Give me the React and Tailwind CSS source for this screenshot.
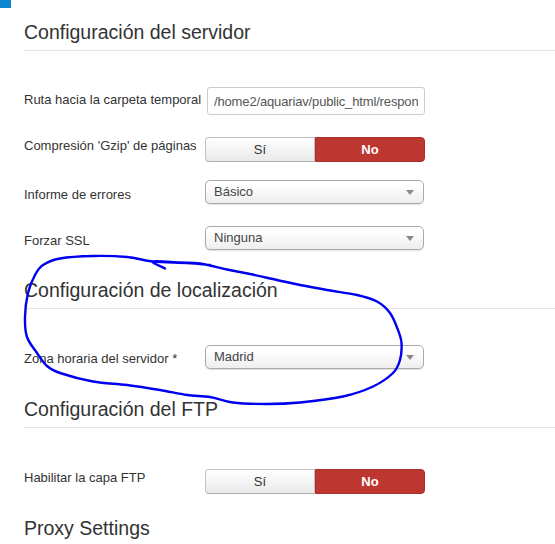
const scribblePts = [
  [210, 265], [187, 263], [153, 261.5], [127, 257], [93, 256], [60, 258.5], [43, 265],
  [35, 275], [28, 293], [25, 317], [27, 337], [37, 353], [47, 366], [60, 373],
  [93, 381.5], [127, 385], [160, 390], [187, 395], [210, 397], [233, 402.5],
  [267, 404], [300, 402.5], [343, 396.5], [373, 386.5], [393, 373], [400, 360],
  [401.5, 343], [398, 330], [390, 313], [377, 301.5], [357, 295], [327, 290],
  [300, 285], [277, 280], [250, 274], [227, 269.5], [200, 263.5], [180, 262.5],
  [153, 261.5], [165, 268.5],
];

function smoothPath(pts) {
  let d = `M${pts[0][0]},${pts[0][1]}`;
  for (let i = 0; i < pts.length - 1; i++) {
    const p0 = pts[i - 1] || pts[i];
    const p1 = pts[i];
    const p2 = pts[i + 1];
    const p3 = pts[i + 2] || p2;
    const c1 = [p1[0] + (p2[0] - p0[0]) / 6, p1[1] + (p2[1] - p0[1]) / 6];
    const c2 = [p2[0] - (p3[0] - p1[0]) / 6, p2[1] - (p3[1] - p1[1]) / 6];
    d += ` C${c1[0]},${c1[1]} ${c2[0]},${c2[1]} ${p2[0]},${p2[1]}`;
  }
  return d;
}

function Legend({ children, className = "" }) {
  return (
    <h2 className={`border-b border-[#e5e5e5] text-[19.5px] leading-[36px] text-[#333] ${className}`}>
      {children}
    </h2>
  );
}

function Toggle() {
  return (
    <div className="flex h-[25px] w-[220px] text-[13px]">
      <span className="flex flex-1 items-center justify-center rounded-l-[4px] border border-[#c2c2c2] border-b-[#adadad] bg-linear-to-b from-white to-[#e9e9e9] text-[#333]">
        Sí
      </span>
      <span className="flex flex-1 items-center justify-center rounded-r-[4px] border border-[#a9302a] bg-[#bd362f] font-bold text-white">
        No
      </span>
    </div>
  );
}

function Select({ value }) {
  return (
    <div className="flex h-[24px] w-[219px] items-center justify-between rounded-[5px] border border-[#aaa] bg-linear-to-b from-white from-20% to-[#eeeeee] pl-[8px] pr-[9px] text-[13px] text-[#444] shadow-[0_1px_1px_rgba(0,0,0,0.12)]">
      <span>{value}</span>
      <span className="h-0 w-0 border-x-[4px] border-t-[5px] border-x-transparent border-t-[#888]" />
    </div>
  );
}

export default function App() {
  return (
    <div className="relative min-h-screen overflow-hidden bg-white font-['Liberation_Sans',Arial,sans-serif] text-[13px] leading-[18px] text-[#333]">
      <div className="h-2 w-[11px] bg-[#0a86cf]" />

      <div className="pl-6">
        <Legend className="mt-[6px]">Configuración del servidor</Legend>

        <div className="mt-[36px] flex items-start">
          <label className="w-[181px] pt-[4px]">Ruta hacia la carpeta temporal</label>
          <input
            readOnly
            value="/home2/aquariav/public_html/responsive/tmp"
            className="ml-[2px] h-[28px] w-[218px] rounded-[3px] border border-[#ccc] px-[6px] text-[13px] tracking-[-0.15px] text-[#555] outline-none"
          />
        </div>

        <div className="mt-[22px] flex items-start">
          <label className="w-[181px]">Compresión 'Gzip' de páginas</label>
          <Toggle />
        </div>

        <div className="mt-[18px] flex items-start">
          <label className="w-[181px] pt-[6px]">Informe de errores</label>
          <Select value="Básico" />
        </div>

        <div className="mt-[22px] flex items-start">
          <label className="w-[181px] pt-[6px]">Forzar SSL</label>
          <Select value="Ninguna" />
        </div>

        <Legend className="mt-[22px]">Configuración de localización</Legend>

        <div className="mt-[36px] flex items-start">
          <label className="w-[181px] pt-[5px]">Zona horaria del servidor *</label>
          <Select value="Madrid" />
        </div>

        <Legend className="mt-[22px]">Configuración del FTP</Legend>

        <div className="mt-[41px] flex items-start">
          <label className="w-[181px]">Habilitar la capa FTP</label>
          <Toggle />
        </div>

        <Legend className="mt-[16px] border-transparent">Proxy Settings</Legend>
      </div>

      <svg
        className="pointer-events-none absolute left-0 top-0"
        width="555"
        height="544"
        viewBox="0 0 555 544"
        fill="none"
      >
        <path
          d={smoothPath(scribblePts)}
          stroke="#0000f0"
          strokeWidth="2.4"
          strokeLinecap="round"
          strokeLinejoin="round"
        />
      </svg>
    </div>
  );
}
